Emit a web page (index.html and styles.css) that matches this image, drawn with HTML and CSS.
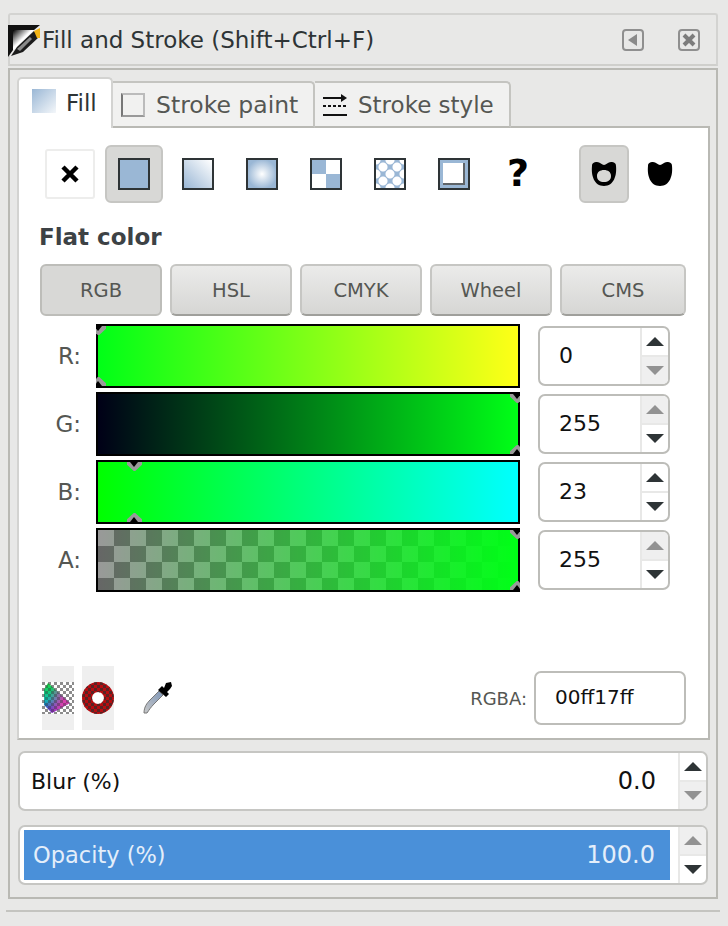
FILE: index.html
```html
<!DOCTYPE html>
<html lang="en">
<head>
    <meta charset="UTF-8">
    <title>Fill and Stroke</title>
    <link rel="stylesheet" href="styles.css">
</head>
<body>
    <!-- Title bar of the dock -->
    <div class="titlebar">
        <svg class="app-icon" width="32" height="32" viewBox="0 0 32 32">
            <defs>
                <linearGradient id="appbg" x1="0" y1="0" x2="1" y2="1">
                    <stop offset="0" stop-color="#000"/>
                    <stop offset="0.45" stop-color="#fff"/>
                    <stop offset="1" stop-color="#fff"/>
                </linearGradient>
            </defs>
            <path d="M0 0H32L26 5H5V25L0 32Z" fill="#111"/>
            <path d="M5 5H26L7 24L5 25Z" fill="url(#appbg)"/>
            <path d="M3 31L9 22L26 6L31 12L15 27Z" fill="#1c1c1c"/>
            <path d="M9 24L22 12L24 14L12 26Z" fill="#8a8a8a"/>
            <path d="M26 6L32 3V13L29 13Z" fill="#f3b416"/>
        </svg>
        <span class="title">Fill and Stroke (Shift+Ctrl+F)</span>
        <span class="dock-btn dock-btn-first">
            <svg width="22" height="22" viewBox="0 0 22 22"><rect x="1" y="1" width="20" height="20" rx="3" fill="none" stroke="#8f8f8f" stroke-width="2"/><path d="M6 11L15 5V17Z" fill="#8a8a8a"/></svg>
        </span>
        <span class="dock-btn">
            <svg width="22" height="22" viewBox="0 0 22 22"><rect x="1" y="1" width="20" height="20" rx="3" fill="none" stroke="#8f8f8f" stroke-width="2"/><path d="M6 6L16 16M16 6L6 16" stroke="#7c7c7c" stroke-width="4"/></svg>
        </span>
    </div>

    <div class="frame">
        <!-- Tabs -->
        <div class="tabs">
            <div class="tab tab-active">
                <span class="tab-fill-icon"></span>
                <span class="tab-fill-text">Fill</span>
            </div>
            <div class="tab tab-paint">
                <span class="tab-stroke-icon"></span>
                <span>Stroke paint</span>
            </div>
            <div class="tab tab-style">
                <svg width="24" height="24" viewBox="0 0 24 24">
                    <path d="M0 5H20" stroke="#111" stroke-width="2"/>
                    <path d="M18 1L24 5L18 9Z" fill="#111"/>
                    <path d="M0 13H24" stroke="#111" stroke-width="2" stroke-dasharray="3 2"/>
                    <path d="M0 22H24" stroke="#111" stroke-width="2"/>
                </svg>
                <span>Stroke style</span>
            </div>
        </div>

        <div class="page">
            <!-- Paint type buttons -->
            <div class="modes">
                <div class="slot">
                    <div class="none-btn">
                        <svg width="18" height="18" viewBox="0 0 18 18"><path d="M2 2L16 16M16 2L2 16" stroke="#000" stroke-width="4.5"/></svg>
                    </div>
                </div>
                <div class="slot slot-on"><span class="swatch swatch-flat"></span></div>
                <div class="slot"><span class="swatch swatch-linear"></span></div>
                <div class="slot"><span class="swatch swatch-radial"></span></div>
                <div class="slot"><span class="swatch swatch-pattern"></span></div>
                <div class="slot"><span class="swatch swatch-dots"></span></div>
                <div class="slot"><span class="swatch swatch-frame"></span></div>
                <div class="slot"><span class="unknown">?</span></div>
                <div class="rule rule-on">
                    <svg width="26" height="24" viewBox="0 0 26 24"><path fill-rule="evenodd" d="M1 4C1 1 3 0 6 0C9 0 11 3 13 3C15 3 17 0 20 0C23 0 25 1 25 4C26 13 23 24 13 24C3 24 0 13 1 4ZM13 8C9 8 6 10 6 14C6 18 9 20 13 20C17 20 20 18 20 14C20 10 17 8 13 8Z" fill="#000"/></svg>
                </div>
                <div class="rule">
                    <svg width="26" height="24" viewBox="0 0 26 24"><path d="M1 4C1 1 3 0 6 0C9 0 11 3 13 3C15 3 17 0 20 0C23 0 25 1 25 4C26 13 23 24 13 24C3 24 0 13 1 4Z" fill="#000"/></svg>
                </div>
            </div>

            <div class="mode-name">Flat color</div>

            <!-- Color model buttons -->
            <div class="models">
                <div class="model model-on">RGB</div>
                <div class="model">HSL</div>
                <div class="model">CMYK</div>
                <div class="model">Wheel</div>
                <div class="model model-wide">CMS</div>
            </div>

            <!-- Channel sliders -->
            <div class="channel">
                <label class="channel-label">R:</label>
                <div class="slider slider-r">
                    <i class="mark mark-top mark-start"></i><i class="mark mark-bottom mark-start"></i>
                </div>
                <div class="spin">
                    <span class="spin-value">0</span>
                    <div class="spin-btns"><span class="up"></span><span class="down off"></span></div>
                </div>
            </div>
            <div class="channel">
                <label class="channel-label">G:</label>
                <div class="slider slider-g">
                    <i class="mark mark-top mark-end"></i><i class="mark mark-bottom mark-end"></i>
                </div>
                <div class="spin">
                    <span class="spin-value">255</span>
                    <div class="spin-btns"><span class="up off"></span><span class="down"></span></div>
                </div>
            </div>
            <div class="channel">
                <label class="channel-label">B:</label>
                <div class="slider slider-b">
                    <i class="mark mark-top mark-b"></i><i class="mark mark-bottom mark-b"></i>
                </div>
                <div class="spin">
                    <span class="spin-value">23</span>
                    <div class="spin-btns"><span class="up"></span><span class="down"></span></div>
                </div>
            </div>
            <div class="channel">
                <label class="channel-label">A:</label>
                <div class="slider slider-a">
                    <i class="mark mark-top mark-end"></i><i class="mark mark-bottom mark-end"></i>
                </div>
                <div class="spin">
                    <span class="spin-value">255</span>
                    <div class="spin-btns"><span class="up off"></span><span class="down"></span></div>
                </div>
            </div>

            <!-- Color managed / out of gamut / picker / hex -->
            <div class="tools">
                <div class="tool-box">
                    <svg width="32" height="32" viewBox="0 0 32 32">
                        <defs>
                            <pattern id="check" width="6" height="6" patternUnits="userSpaceOnUse">
                                <rect width="6" height="6" fill="#fff"/>
                                <rect width="3" height="3" fill="#8c8c8c"/>
                                <rect x="3" y="3" width="3" height="3" fill="#8c8c8c"/>
                            </pattern>
                            <pattern id="dark" width="6" height="6" patternUnits="userSpaceOnUse">
                                <rect width="3" height="3" fill="#333" fill-opacity="0.4"/>
                                <rect x="3" y="3" width="3" height="3" fill="#333" fill-opacity="0.4"/>
                            </pattern>
                            <pattern id="ringcheck" width="6" height="6" patternUnits="userSpaceOnUse">
                                <rect width="3" height="3" fill="#3a2a2a" fill-opacity="0.75"/>
                                <rect x="3" y="3" width="3" height="3" fill="#3a2a2a" fill-opacity="0.75"/>
                            </pattern>
                            <linearGradient id="tri1" x1="0" y1="0" x2="0" y2="1">
                                <stop offset="0" stop-color="#14d83c"/>
                                <stop offset="0.55" stop-color="#10c0b0"/>
                                <stop offset="1" stop-color="#3a22e0"/>
                            </linearGradient>
                            <linearGradient id="tri2" x1="0" y1="0" x2="1" y2="0.4">
                                <stop offset="0.3" stop-color="#e020b0" stop-opacity="0"/>
                                <stop offset="0.85" stop-color="#d840b0"/>
                            </linearGradient>
                        </defs>
                        <rect width="32" height="32" fill="url(#check)"/>
                        <path d="M2 8L6 1L28 21L10 31L2 23Z" fill="url(#tri1)"/>
                        <path d="M2 8L6 1L28 21L10 31L2 23Z" fill="url(#tri2)"/>
                        <path d="M2 8L6 1L28 21L10 31L2 23Z" fill="url(#dark)"/>
                    </svg>
                </div>
                <div class="tool-box">
                    <svg width="32" height="32" viewBox="0 0 32 32">
                        <circle cx="16" cy="16" r="6" fill="#fff"/>
                        <circle cx="16" cy="16" r="11" fill="none" stroke="#b80c10" stroke-width="10"/>
                        <circle cx="16" cy="16" r="11" fill="none" stroke="url(#ringcheck)" stroke-width="10"/>
                    </svg>
                </div>
                <svg class="dropper" width="32" height="32" viewBox="0 0 32 32">
                    <defs>
                        <linearGradient id="tube" x1="0" y1="1" x2="1" y2="0">
                            <stop offset="0" stop-color="#c8c8c8"/>
                            <stop offset="1" stop-color="#7f97b8"/>
                        </linearGradient>
                    </defs>
                    <path d="M2 31C2 25 5 21 8 18L17 9L21 13L12 22C9 25 7 28 5 31Z" fill="url(#tube)" stroke="#777" stroke-width="1"/>
                    <path d="M16 8L20 4L22 6L24 1L29 0L30 4L28 7L25 10L27 12L24 15Z" fill="#000"/>
                </svg>
                <label class="hex-label">RGBA:</label>
                <div class="hex">00ff17ff</div>
            </div>
        </div>

        <!-- Blur and opacity -->
        <div class="scale scale-blur">
            <div class="scale-body">
                <span class="scale-name">Blur (%)</span>
                <span>0.0</span>
            </div>
            <div class="spin-btns"><span class="up"></span><span class="down off"></span></div>
        </div>
        <div class="scale scale-opacity">
            <div class="scale-body">
                <span class="scale-name">Opacity (%)</span>
                <span>100.0</span>
            </div>
            <div class="spin-btns"><span class="up off"></span><span class="down"></span></div>
        </div>
    </div>

    <div class="statusline"></div>
</body>
</html>
```
FILE: styles.css
```css
* {
    box-sizing: border-box;
}
html, body {
    margin: 0;
    height: 926px;
    overflow: hidden;
}
body {
    background-color: #e8e8e7;
    padding-top: 13px;
    font-family: "DejaVu Sans", sans-serif;
    font-size: 23px;
    color: #2e3436;
}

/* Title bar */
.titlebar {
    width: 710px;
    height: 53px;
    margin-left: 8px;
    border: 2px solid #d3d3d1;
    border-bottom-color: #cfcfcc;
    border-radius: 3px 3px 0 0;
    display: flex;
    align-items: center;
}
.app-icon {
    margin-left: -2px;
    margin-top: 3px;
}
.title {
    margin-left: 2px;
    color: #2e3436;
}
.dock-btn {
    display: flex;
    margin-left: 34px;
}
.dock-btn-first {
    margin-left: auto;
}
.titlebar .dock-btn:last-child {
    margin-right: 16px;
}

/* Frame and tabs */
.frame {
    width: 710px;
    height: 831px;
    margin: 2px 0 0 8px;
    padding: 7px 6px 0 7px;
    border: 2px solid #b9b9b4;
    border-bottom-width: 2px;
}
.tabs {
    display: flex;
    align-items: flex-end;
    height: 51px;
    position: relative;
    z-index: 1;
    margin-bottom: -2px;
}
.tab {
    display: flex;
    align-items: center;
    background-color: #f1f1f0;
    border: 2px solid #c4c4c0;
    border-left: none;
    border-bottom: 2px solid #b9b9b4;
    border-radius: 0 5px 0 0;
    height: 47px;
    color: #555753;
}
.tab-active {
    width: 96px;
    height: 51px;
    background-color: #fff;
    border-left: 2px solid #d3d3d1;
    border-top-color: #d3d3d1;
    border-right-color: #d3d3d1;
    border-bottom: none;
    border-radius: 5px 5px 0 0;
    padding: 0 0 6px 13px;
    color: #2e3436;
    gap: 10px;
}
.tab-fill-text {
    margin-top: 4px;
}
.tab-paint {
    width: 202px;
    padding-left: 8px;
    gap: 11px;
    font-size: 23.5px;
}
.tab-style {
    width: 196px;
    padding-left: 8px;
    gap: 11px;
}
.tab-fill-icon {
    width: 24px;
    height: 24px;
    background: linear-gradient(to bottom right, #9ab7d5, #f4f7fa);
}
.tab-stroke-icon {
    width: 24px;
    height: 24px;
    border: 2px solid #bbb;
    border-left-color: #777;
    border-bottom-color: #999;
    background-color: #f1f1f0;
}

/* Page */
.page {
    width: 693px;
    height: 614px;
    background-color: #fff;
    border: 2px solid #b9b9b4;
    border-left-color: #d3d3d1;
    padding-top: 17px;
}
.modes {
    display: flex;
    align-items: center;
    padding-left: 19px;
    height: 58px;
}
.slot {
    width: 64px;
    height: 58px;
    display: flex;
    align-items: center;
    justify-content: center;
}
.slot-on {
    width: 58px;
    margin: 0 3px;
    background-color: #d8d8d6;
    border: 2px solid #c6c6c3;
    border-radius: 6px;
}
.none-btn {
    width: 50px;
    height: 50px;
    border: 2px solid #ededec;
    border-radius: 3px;
    display: flex;
    align-items: center;
    justify-content: center;
}
.swatch {
    width: 32px;
    height: 32px;
    border: 2px solid #2e3436;
}
.swatch-flat {
    background-color: #9ab7d5;
}
.swatch-linear {
    background: linear-gradient(to top right, #9ab7d5, #fff);
}
.swatch-radial {
    background: radial-gradient(circle, #fff, #9ab7d5 75%);
}
.swatch-pattern {
    background: conic-gradient(#fff 25%, #9ab7d5 25% 50%, #fff 50% 75%, #9ab7d5 75%);
    border-top-color: #3a3f41;
}
.swatch-dots {
    background-color: #9ab7d5;
    background-image:
        radial-gradient(circle, #fff 4px, transparent 5px),
        radial-gradient(circle, #fff 4px, transparent 5px);
    background-size: 14px 14px;
    background-position: 0 0, 7px 7px;
}
.swatch-frame {
    background-color: #fff;
    box-shadow: inset 3px 3px 0 #9ab7d5, inset -3px -3px 0 #9ab7d5, inset -5px -5px 0 #5f6468;
}
.unknown {
    font-weight: bold;
    font-size: 38px;
    line-height: 58px;
    color: #000;
    margin-top: -2px;
}
.rule {
    width: 50px;
    height: 58px;
    display: flex;
    align-items: center;
    justify-content: center;
    margin-left: 6px;
}
.rule-on {
    margin-left: 29px;
    background-color: #d8d8d6;
    border: 2px solid #c6c6c3;
    border-radius: 6px;
}
.mode-name {
    margin: 20px 0 0 20px;
    height: 41px;
    font-weight: bold;
    line-height: 28px;
    color: #3d4245;
}

/* Color models */
.models {
    display: flex;
    gap: 8px;
    padding-left: 21px;
    height: 52px;
    margin-bottom: 8px;
}
.model {
    width: 122px;
    display: flex;
    align-items: center;
    justify-content: center;
    font-size: 19.5px;
    color: #555753;
    background: linear-gradient(#ebebea, #d6d6d4);
    border: 2px solid #c6c6c3;
    border-bottom-color: #9f9f9b;
    border-radius: 6px;
}
.model-on {
    background: #d8d8d6;
    border-color: #bdbdb9;
}
.model-wide {
    width: 126px;
}

/* Channel rows */
.channel {
    display: flex;
    align-items: center;
    height: 64px;
    margin-bottom: 4px;
}
.channel-label {
    width: 62px;
    text-align: right;
    color: #555753;
}
.slider {
    position: relative;
    width: 424px;
    height: 64px;
    margin-left: 15px;
    border: 2px solid #000;
    clip-path: inset(0);
}
.slider-r {
    background: linear-gradient(to right, #00ff17, #ffff17);
}
.slider-g {
    background: linear-gradient(to right, #000017, #00ff17);
}
.slider-b {
    background: linear-gradient(to right, #00ff00, #00ffff);
}
.slider-a {
    background:
        linear-gradient(to right, rgba(0, 255, 23, 0), #00ff17),
        conic-gradient(#666 25%, #999 25% 50%, #666 50% 75%, #999 75%) 0 0 / 32px 32px;
}
.mark {
    position: absolute;
    width: 15px;
    height: 9px;
    background-color: #9a9a9a;
}
.mark::before {
    content: "";
    position: absolute;
    left: 3px;
    border-left: 4px solid transparent;
    border-right: 4px solid transparent;
}
.mark-top {
    top: 0;
    clip-path: polygon(0 0, 100% 0, 100% 30%, 55% 100%, 45% 100%, 0 30%);
}
.mark-top::before {
    top: 0;
    border-top: 5px solid #000;
}
.mark-bottom {
    bottom: 0;
    clip-path: polygon(45% 0, 55% 0, 100% 70%, 100% 100%, 0 100%, 0 70%);
}
.mark-bottom::before {
    bottom: 0;
    border-bottom: 5px solid #000;
}
.mark-start {
    left: -7px;
}
.mark-end {
    right: -7px;
}
.mark-b {
    left: 29px;
}
.spin {
    display: flex;
    width: 132px;
    height: 60px;
    margin-left: 18px;
    background-color: #fff;
    border: 2px solid #bdbdb9;
    border-radius: 7px;
    overflow: hidden;
}
.spin-value {
    flex: 1;
    padding-left: 19px;
    font-size: 22px;
    line-height: 56px;
    color: #111;
}
.spin-btns {
    display: flex;
    flex-direction: column;
    width: 28px;
    border-left: 2px solid #e8e8e7;
}
.spin-btns span {
    flex: 1;
    display: flex;
    align-items: center;
    justify-content: center;
}
.spin-btns span::before {
    content: "";
    border-left: 9px solid transparent;
    border-right: 9px solid transparent;
}
.up {
    border-bottom: 2px solid #e8e8e7;
}
.up::before {
    border-bottom: 9px solid #2e3436;
}
.down::before {
    border-top: 9px solid #2e3436;
}
.spin-btns .off {
    background-color: #efefef;
}
.up.off::before {
    border-bottom-color: #929292;
}
.down.off::before {
    border-top-color: #929292;
}

/* Bottom tools row */
.tools {
    display: flex;
    align-items: center;
    height: 64px;
    margin-top: 74px;
    padding-left: 23px;
}
.tool-box {
    width: 32px;
    height: 64px;
    margin-right: 8px;
    background-color: #efefef;
    display: flex;
    align-items: center;
}
.dropper {
    margin-left: 20px;
}
.hex-label {
    margin-left: auto;
    font-size: 18px;
    color: #555753;
}
.hex {
    width: 152px;
    height: 54px;
    margin: 0 22px 0 7px;
    padding-left: 19px;
    border: 2px solid #bdbdb9;
    border-radius: 7px;
    line-height: 48px;
    color: #111;
    font-size: 20px;
}

/* Blur and opacity scales */
.scale {
    display: flex;
    width: 690px;
    height: 60px;
    margin-left: 1px;
    background-color: #fff;
    border: 2px solid #c6c6c3;
    border-radius: 7px;
    overflow: hidden;
}
.scale-blur {
    margin-top: 11px;
}
.scale-opacity {
    margin-top: 14px;
    background-color: #fff;
}
.scale-body {
    flex: 1;
    display: flex;
    justify-content: space-between;
    align-items: center;
    padding: 0 22px 0 11px;
    color: #111;
    font-size: 24px;
}
.scale-name {
    font-size: 22px;
}
.scale-opacity .scale-body {
    margin: 3px 8px 3px 4px;
    padding: 0 15px 0 9px;
    background-color: #4a90d9;
    color: #e4eefa;
}
.scale-opacity .scale-name {
    font-size: 22.5px;
}
.statusline {
    width: 714px;
    height: 2px;
    margin: 11px 0 0 6px;
    background-color: #c4c4c0;
}
```
